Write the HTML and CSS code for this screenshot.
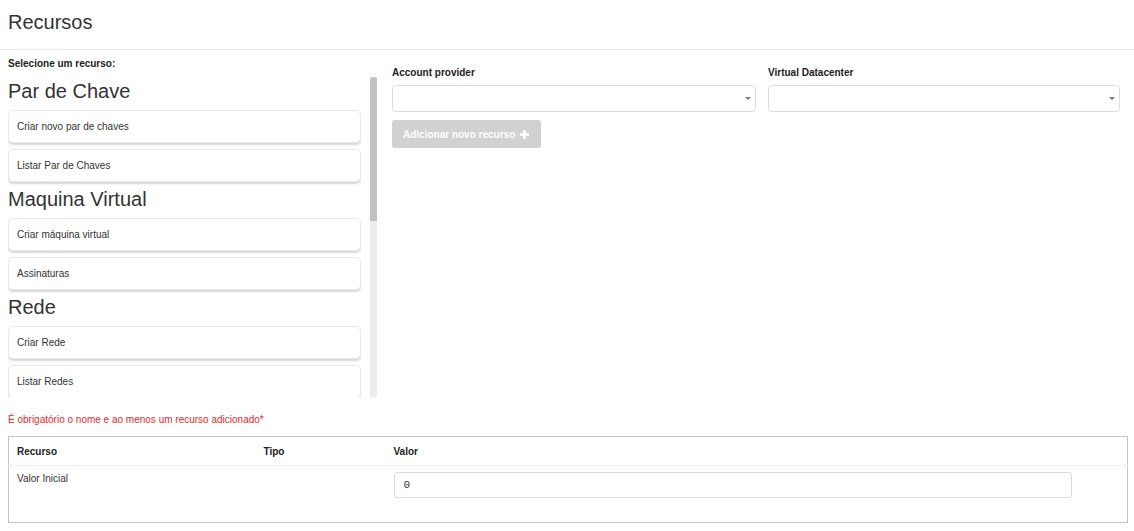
FILE: index.html
```html
<!DOCTYPE html>
<html lang="pt">
<head>
<meta charset="utf-8">
<title>Recursos</title>
<link rel="stylesheet" href="styles.css">
</head>
<body>
<header class="page-header">
  <h1 class="page-title">Recursos</h1>
</header>

<main class="content">
  <div class="top-row">
    <section class="picker">
      <div class="picker-label">Selecione um recurso:</div>
      <div class="picker-box">
        <div class="picker-list">
          <h2 class="group-title">Par de Chave</h2>
          <div class="card">Criar novo par de chaves</div>
          <div class="card">Listar Par de Chaves</div>
          <h2 class="group-title">Maquina Virtual</h2>
          <div class="card">Criar máquina virtual</div>
          <div class="card">Assinaturas</div>
          <h2 class="group-title">Rede</h2>
          <div class="card">Criar Rede</div>
          <div class="card">Listar Redes</div>
        </div>
        <div class="scrollbar"><div class="scroll-thumb"></div></div>
      </div>
    </section>

    <section class="form">
      <div class="fields">
        <div class="field">
          <label class="field-label">Account provider</label>
          <div class="select"><span class="caret"></span></div>
        </div>
        <div class="field">
          <label class="field-label">Virtual Datacenter</label>
          <div class="select"><span class="caret"></span></div>
        </div>
      </div>
      <button class="add-btn" disabled>Adicionar novo recurso
        <svg class="plus" width="9" height="9" viewBox="0 0 9 9"><rect x="3.2" y="0" width="2.6" height="9" fill="#fff"/><rect x="0" y="3.2" width="9" height="2.6" fill="#fff"/></svg>
      </button>
    </section>
  </div>

  <p class="error">É obrigatório o nome e ao menos um recurso adicionado*</p>

  <table class="res-table">
    <thead>
      <tr>
        <th class="col-rec">Recurso</th>
        <th class="col-tipo">Tipo</th>
        <th class="col-valor">Valor</th>
      </tr>
    </thead>
    <tbody>
      <tr>
        <td>Valor Inicial</td>
        <td></td>
        <td><div class="value-input">0</div></td>
      </tr>
    </tbody>
  </table>
</main>
</body>
</html>
```

FILE: styles.css
```css
* { box-sizing: border-box; }

html, body {
  margin: 0;
  padding: 0;
  background: #fff;
  font-family: "Liberation Sans", Arial, sans-serif;
  color: #333;
}

.page-header {
  height: 50px;
  padding: 11px 8px 0;
  border-bottom: 1px solid #e6e6e6;
}

.page-title {
  margin: 0;
  font-size: 20px;
  line-height: 22px;
  font-weight: normal;
  color: #333;
}

.content {
  padding: 8px 8px 0;
}

.top-row {
  display: flex;
  gap: 15px;
}

.picker {
  width: 369px;
  flex: none;
}

.picker-label {
  font-size: 10px;
  line-height: 12px;
  font-weight: bold;
  margin-bottom: 7px;
  color: #222;
}

.picker-box {
  display: flex;
  gap: 9px;
  height: 320px;
}

.picker-list {
  width: 353px;
  flex: none;
  overflow: hidden;
  padding-top: 3px;
}

.scrollbar {
  width: 7px;
  flex: none;
  background: #ececec;
}

.scroll-thumb {
  height: 144px;
  background: #c1c1c1;
  border-radius: 3px 3px 0 0;
}

.group-title {
  margin: 0 0 8px;
  font-size: 20px;
  line-height: 22px;
  font-weight: normal;
  color: #333;
}

.card {
  height: 33px;
  margin-bottom: 6px;
  padding: 0 8px;
  border: 1px solid #e8e8e8;
  border-radius: 5px;
  box-shadow: 0 2px 2px rgba(0, 0, 0, 0.16);
  font-size: 10px;
  line-height: 31px;
  color: #333;
  background: #fff;
}

.form {
  padding-top: 9px;
}

.fields {
  display: grid;
  grid-template-columns: 364px 352px;
  gap: 12px;
}

.field-label {
  display: block;
  font-size: 10px;
  line-height: 12px;
  font-weight: bold;
  margin-bottom: 6px;
  color: #222;
}

.select {
  position: relative;
  height: 27px;
  border: 1px solid #dcdcdc;
  border-radius: 4px;
  background: #fff;
}

.caret {
  position: absolute;
  right: 4px;
  top: 11px;
  width: 0;
  height: 0;
  border-left: 3px solid transparent;
  border-right: 3px solid transparent;
  border-top: 3px solid #777;
}

.add-btn {
  display: flex;
  align-items: center;
  gap: 5px;
  margin-top: 8px;
  height: 28px;
  width: 149px;
  padding: 0 0 0 11px;
  border: none;
  border-radius: 3px;
  background: #d1d1d1;
  color: #fff;
  font-family: "Liberation Sans", Arial, sans-serif;
  font-size: 10px;
  font-weight: bold;
  cursor: default;
}

.error {
  margin: 17px 0 0;
  font-size: 10px;
  line-height: 12px;
  color: #e8262b;
}

.res-table {
  margin-top: 10px;
  width: 1120px;
  border: 1px solid #c4c4c4;
  border-collapse: collapse;
  font-size: 10px;
  color: #333;
}

.res-table th {
  text-align: left;
  font-weight: bold;
  height: 29px;
  padding: 0 8px;
  border-bottom: 1px solid #efefef;
  color: #222;
}

.col-rec { width: 247px; }
.col-tipo { width: 130px; }

.res-table td {
  vertical-align: top;
  padding: 6px 8px 24px;
  line-height: 12px;
}

.res-table td:first-child {
  padding-top: 7px;
}

.value-input {
  width: 678px;
  height: 26px;
  border: 1px solid #dcdcdc;
  border-radius: 3px;
  padding: 0 9px;
  font-family: "Liberation Mono", "DejaVu Sans Mono", monospace;
  font-size: 11px;
  line-height: 24px;
  color: #333;
}
```
